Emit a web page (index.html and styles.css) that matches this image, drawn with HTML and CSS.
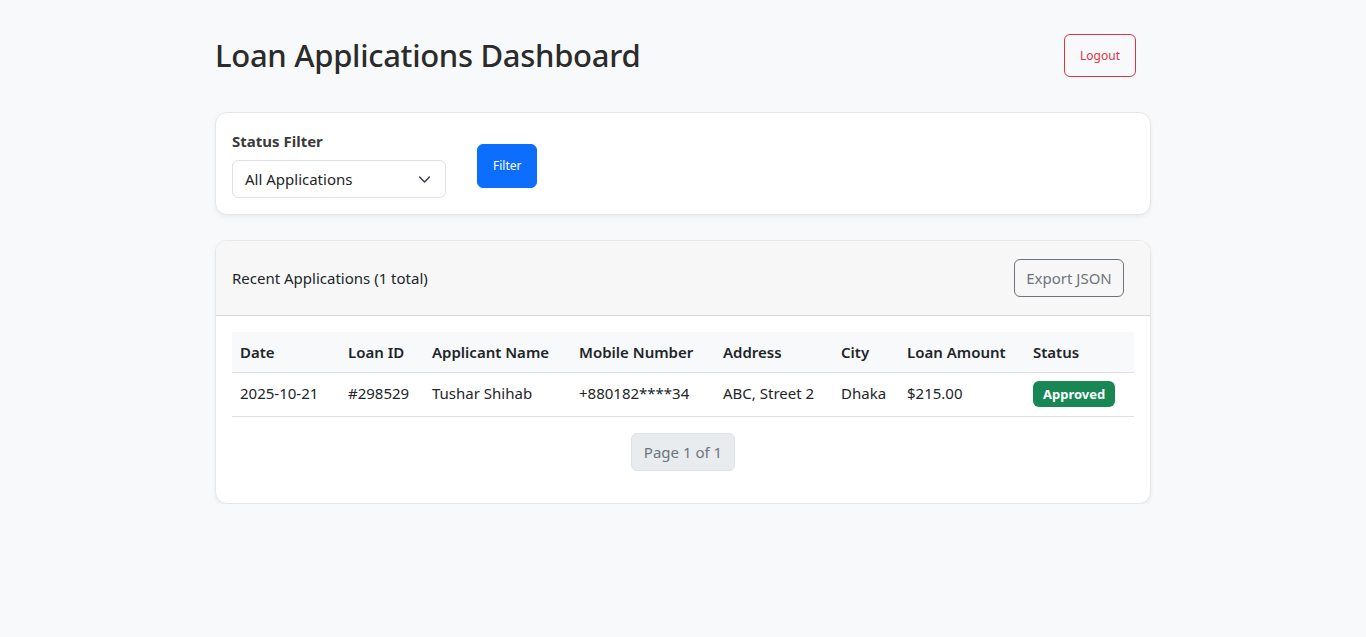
FILE: index.html
```html
<!DOCTYPE html>
<html lang="en">
<head>
<meta charset="utf-8">
<title>Loan Applications Dashboard</title>
<link rel="stylesheet" href="styles.css">
</head>
<body>
<div class="container">
  <header class="page-header">
    <h1 class="title">Loan Applications Dashboard</h1>
    <button class="btn btn-logout">Logout</button>
  </header>

  <section class="card filter-card">
    <div class="filter-group">
      <label class="filter-label">Status Filter</label>
      <div class="select">
        <span>All Applications</span>
        <svg class="chev" width="13" height="13" viewBox="0 0 16 16"><path d="M2 5l6 6 6-6" fill="none" stroke="#343a40" stroke-width="1.8" stroke-linecap="round" stroke-linejoin="round"/></svg>
      </div>
    </div>
    <button class="btn btn-filter">Filter</button>
  </section>

  <section class="card table-card">
    <div class="card-header">
      <span class="header-title">Recent Applications (1 total)</span>
      <button class="btn btn-export">Export JSON</button>
    </div>
    <div class="card-body">
      <table class="table">
        <colgroup>
          <col class="c-date"><col class="c-id"><col class="c-name"><col class="c-mobile"><col class="c-addr"><col class="c-city"><col class="c-amt"><col class="c-status">
        </colgroup>
        <thead>
          <tr><th>Date</th><th>Loan ID</th><th>Applicant Name</th><th>Mobile Number</th><th>Address</th><th>City</th><th>Loan Amount</th><th>Status</th></tr>
        </thead>
        <tbody>
          <tr><td>2025-10-21</td><td>#298529</td><td>Tushar Shihab</td><td>+880182****34</td><td>ABC, Street 2</td><td>Dhaka</td><td>$215.00</td><td><span class="badge">Approved</span></td></tr>
        </tbody>
      </table>
      <nav class="pager"><span class="page-item">Page 1 of 1</span></nav>
    </div>
  </section>
</div>
</body>
</html>
```
FILE: styles.css
```css
* { box-sizing: border-box; }
html, body { margin: 0; padding: 0; }
body {
  background: #f8f9fa;
  font-family: "Noto Sans", "Open Sans", sans-serif;
  font-size: 16px;
  line-height: 1.5;
  color: #212529;
}
.container {
  max-width: 960px;
  margin: 0 auto;
  padding: 34px 12px 0;
}
.page-header {
  display: flex;
  align-items: center;
  justify-content: space-between;
  margin-bottom: 35px;
}
.title {
  margin: 0;
  font-size: 31px;
  font-weight: 500;
  line-height: 1.2;
  color: #2b2b2b;
  letter-spacing: -0.3px;
}
.btn {
  font-family: inherit;
  cursor: pointer;
  border-radius: 6px;
}
.btn-logout {
  margin-right: 15px;
  background: transparent;
  border: 1px solid #dc3545;
  color: #dc3545;
  font-size: 12px;
  line-height: 17px;
  padding: 12px 15px;
  width: 72px;
  height: 43px;
}
.card {
  background: #fff;
  border: 1px solid #e6e7e9;
  border-radius: 12px;
  box-shadow: 0 2px 4px rgba(0,0,0,0.06);
}
.filter-card {
  display: flex;
  align-items: flex-start;
  padding: 16px;
  margin-bottom: 25px;
}
.filter-group { display: flex; flex-direction: column; }
.filter-label {
  font-weight: 700;
  font-size: 15px;
  color: #3a3a3a;
  line-height: 24px;
  margin-bottom: 7px;
}
.select {
  width: 214px;
  height: 38px;
  border: 1px solid #dee2e6;
  border-radius: 6px;
  display: flex;
  align-items: center;
  justify-content: space-between;
  padding: 0 14px 0 12px;
  font-size: 15px;
  color: #212529;
}
.chev { display: block; }
.btn-filter {
  margin-left: 31px;
  margin-top: 15px;
  background: #0d6efd;
  border: 1px solid #0d6efd;
  color: #fff;
  font-size: 12px;
  line-height: 18px;
  padding: 12px 15px;
  width: 60px;
  height: 44px;
}
.table-card { overflow: hidden; }
.card-header {
  display: flex;
  align-items: center;
  justify-content: space-between;
  background: #f7f7f7;
  border-bottom: 1px solid #d9d9d9;
  padding: 18px 26px 18px 16px;
}
.header-title { font-size: 15px; }
.btn-export {
  background: transparent;
  border: 1px solid #6c757d;
  color: #6c757d;
  font-size: 15px;
  line-height: 24px;
  padding: 6px 11px;
  width: 110px;
  height: 38px;
}
.card-body { padding: 16px 16px 32px; }
.table {
  width: 100%;
  border-collapse: collapse;
  table-layout: fixed;
  font-size: 15px;
}
.c-date { width: 108px; }
.c-id { width: 84px; }
.c-name { width: 147px; }
.c-mobile { width: 144px; }
.c-addr { width: 118px; }
.c-city { width: 66px; }
.c-amt { width: 126px; }
.c-status { width: 109px; }
.table th, .table td {
  text-align: left;
  padding: 7px 8px;
  border-bottom: 1px solid #dee2e6;
  white-space: nowrap;
  vertical-align: middle;
}
.table th {
  background: #f8f9fa;
  font-weight: 600;
  height: 40px;
}
.table td { height: 44px; padding-top: 6px; }
.badge {
  display: inline-block;
  background: #198754;
  color: #fff;
  font-weight: 700;
  font-size: 13px;
  line-height: 16px;
  padding: 5px 10px;
  border-radius: 6px;
}
.pager {
  display: flex;
  justify-content: center;
  margin-top: 16px;
}
.page-item {
  display: inline-block;
  background: #e9ecef;
  border: 1px solid #dee2e6;
  border-radius: 6px;
  color: #6c757d;
  font-size: 15px;
  line-height: 24px;
  padding: 6px 12px;
  height: 38px;
}
```
